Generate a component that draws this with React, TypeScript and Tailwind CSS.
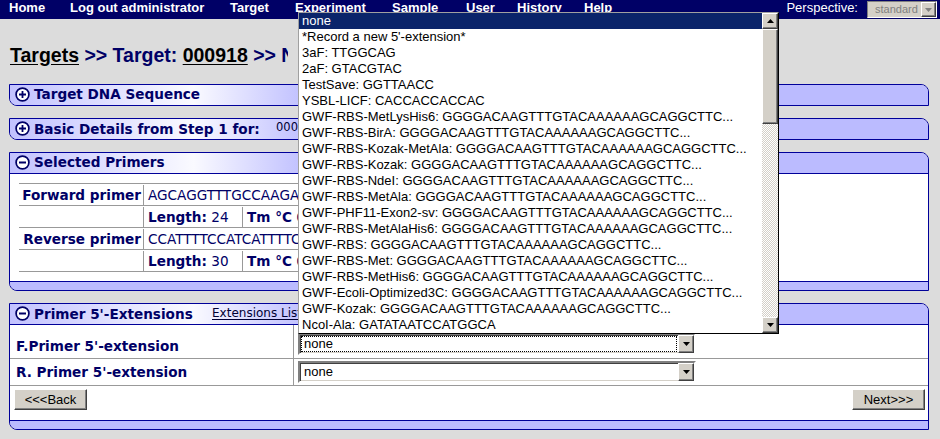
import React from "react";

const NAV = [
  { label: "Home", cls: "w-[61px]" },
  { label: "Log out administrator", cls: "w-[160px]" },
  { label: "Target", cls: "w-[65px]" },
  { label: "Experiment", cls: "w-[97px]" },
  { label: "Sample", cls: "w-[74px]" },
  { label: "User", cls: "w-[51px]" },
  { label: "History", cls: "w-[67px]" },
  { label: "Help", cls: "w-[60px]" },
];

const GWF = "GGGGACAAGTTTGTACAAAAAAGCAGGCTTC...";

const EXTENSIONS = [
  "none",
  "*Record a new 5'-extension*",
  "3aF: TTGGCAG",
  "2aF: GTACGTAC",
  "TestSave: GGTTAACC",
  "YSBL-LICF: CACCACCACCAC",
  `GWF-RBS-MetLysHis6: ${GWF}`,
  `GWF-RBS-BirA: ${GWF}`,
  `GWF-RBS-Kozak-MetAla: ${GWF}`,
  `GWF-RBS-Kozak: ${GWF}`,
  `GWF-RBS-NdeI: ${GWF}`,
  `GWF-RBS-MetAla: ${GWF}`,
  `GWF-PHF11-Exon2-sv: ${GWF}`,
  `GWF-RBS-MetAlaHis6: ${GWF}`,
  `GWF-RBS: ${GWF}`,
  `GWF-RBS-Met: ${GWF}`,
  `GWF-RBS-MetHis6: ${GWF}`,
  `GWF-Ecoli-Optimized3C: ${GWF}`,
  `GWF-Kozak: ${GWF}`,
  "NcoI-Ala: GATATAATCCATGGCA",
];

const raised =
  "border border-t-white border-l-white border-r-[#404040] border-b-[#404040] bg-[#d4d0c8] shadow-[inset_-1px_-1px_0_#808080]";

function Arrow({ up = false, color = "#000" }: { up?: boolean; color?: string }) {
  return (
    <svg width="7" height="4" viewBox="0 0 7 4">
      <path d={up ? "M3.5 0L7 4H0z" : "M0 0h7L3.5 4z"} fill={color} />
    </svg>
  );
}

function ToggleIcon({ open }: { open: boolean }) {
  return (
    <svg width="15" height="15" viewBox="0 0 15 15" className="shrink-0">
      <circle cx="7.5" cy="7.5" r="6.4" fill="#fff" stroke="#000066" strokeWidth="1.7" />
      <path d="M4 7.5h7" stroke="#000066" strokeWidth="1.8" />
      {!open && <path d="M7.5 4v7" stroke="#000066" strokeWidth="1.8" />}
    </svg>
  );
}

function SectionHeader({ open, children }: { open: boolean; children: React.ReactNode }) {
  return (
    <div
      className={`flex items-center gap-[4px] bg-[linear-gradient(to_right,#c2c2ff_0%,#fafaff_20%,#bbbbff_33%,#bbbbff_100%)] pb-[2px] pl-[5px] ${
        open ? "h-[21px] border-b border-[#000099]" : "h-[20px]"
      }`}
    >
      <ToggleIcon open={open} />
      {children}
    </div>
  );
}

function Title({ children }: { children: React.ReactNode }) {
  return (
    <span className="font-['DejaVu_Sans',Verdana,sans-serif] text-[13.6px] leading-[17px] font-bold text-[#000066]">
      {children}
    </span>
  );
}

function Select({ focused = false }: { focused?: boolean }) {
  return (
    <div className="flex h-[22px] w-[398px] border-2 border-t-[#808080] border-l-[#808080] border-r-white border-b-white bg-white shadow-[inset_1px_1px_0_#404040,inset_-1px_-1px_0_#d4d0c8]">
      <div className="flex flex-1 items-center p-[1px]">
        <div
          className={`flex h-full flex-1 items-center pl-[2px] font-['Liberation_Sans',Arial,sans-serif] text-[13px] font-normal text-black ${
            focused ? "border border-dotted border-black" : "border border-transparent"
          }`}
        >
          none
        </div>
      </div>
      <div className={`flex w-[16px] items-center justify-center ${raised}`}>
        <Arrow />
      </div>
    </div>
  );
}

function Button({ children }: { children: React.ReactNode }) {
  return (
    <button
      className={`flex h-[21px] w-[73px] items-center justify-center font-['Liberation_Sans',Arial,sans-serif] text-[13px] font-normal text-black ${raised}`}
    >
      {children}
    </button>
  );
}

function ExtensionList() {
  return (
    <div className="absolute top-[12px] left-[298px] z-10 flex h-[322px] w-[481px] border border-t-[#a0a0a0] border-l-[#a0a0a0] border-r-black border-b-black bg-white">
      <ul className="flex-1 font-['Liberation_Sans',Arial,sans-serif] text-[13px] leading-[16px] text-black">
        {EXTENSIONS.map((item, i) => (
          <li
            key={item}
            className={`h-[16px] truncate pl-[3px] ${i === 0 ? "bg-[#0a246a] text-white" : ""}`}
          >
            {item}
          </li>
        ))}
      </ul>
      <div className="flex w-[16px] flex-col">
        <div className={`flex h-[16px] items-center justify-center ${raised}`}>
          <Arrow up />
        </div>
        <div className={`h-[95px] ${raised}`} />
        <div className="flex-1 bg-[repeating-conic-gradient(#d4d0c8_0_25%,#ffffff_0_50%)] bg-[length:2px_2px]" />
        <div className={`flex h-[16px] items-center justify-center ${raised}`}>
          <Arrow />
        </div>
      </div>
    </div>
  );
}

const cell = "border-l border-[#999999] pl-[4px]";

export default function App() {
  return (
    <div className="relative h-[439px] w-[940px] overflow-hidden bg-[#dcdcdc]">
      {/* top navigation */}
      <div className="flex h-[19px] items-start bg-[#000066] font-['Liberation_Sans',Arial,sans-serif] text-[13px] leading-[15px] text-white">
        <nav className="flex pl-[9px] font-bold">
          {NAV.map((n) => (
            <span key={n.label} className={n.cls}>
              {n.label}
            </span>
          ))}
        </nav>
        <div className="ml-auto flex items-start pr-[3px]">
          <span>Perspective:</span>
          <div className="mt-[1px] ml-[9px] flex h-[17px] w-[70px] border border-t-[#808080] border-l-[#808080] border-r-white border-b-white bg-[#d4d0c8]">
            <span className="flex-1 pl-[7px] text-[11px] leading-[15px] text-[#808080]">standard</span>
            <div className={`flex w-[15px] items-center justify-center ${raised}`}>
              <Arrow color="#808080" />
            </div>
          </div>
        </div>
      </div>

      {/* breadcrumb */}
      <h1 className="mt-[25px] w-[288px] overflow-hidden pl-[10px] font-['Liberation_Sans',Arial,sans-serif] text-[19.5px] leading-[22px] font-bold whitespace-nowrap text-[#000066]">
        <a className="text-black underline underline-offset-[2px]">Targets</a>
        {" >> Target: "}
        <a className="text-black underline underline-offset-[2px]">000918</a>
        {" >> New"}
      </h1>

      <div className="mt-[18px] flex flex-col gap-[12px] pr-[11px] pl-[9px]">
        <div className="overflow-hidden rounded-tr-[8px] rounded-bl-[8px] border border-[#000099]">
          <SectionHeader open={false}>
            <Title>Target DNA Sequence</Title>
          </SectionHeader>
        </div>

        <div className="overflow-hidden rounded-tr-[8px] rounded-bl-[8px] border border-[#000099]">
          <SectionHeader open={false}>
            <span className="w-[238px]">
              <Title>Basic Details from Step 1 for:</Title>
            </span>
            <span className="font-['DejaVu_Sans',Verdana,sans-serif] text-[11.5px] text-[#000033]">000918</span>
          </SectionHeader>
        </div>

        <div className="overflow-hidden rounded-tr-[8px] rounded-bl-[8px] border border-[#000099]">
          <SectionHeader open>
            <Title>Selected Primers</Title>
          </SectionHeader>
          <div className="bg-white py-[9px] pl-[9px] font-['DejaVu_Sans',Verdana,sans-serif] text-[13.6px] leading-[20px] text-[#000066]">
            <div className="w-[560px] border-t border-[#999999]">
              <div className="flex h-[22px] items-center border-b border-[#999999]">
                <div className="w-[124px] pr-[2px] text-right font-bold">Forward primer</div>
                <div className={`flex-1 ${cell}`}>AGCAGGTTTGCCAAGATGG</div>
              </div>
              <div className="flex h-[22px] items-center border-b border-[#999999]">
                <div className="w-[124px]" />
                <div className={`w-[99px] ${cell}`}>
                  <b>Length:</b> 24
                </div>
                <div className={`flex-1 ${cell}`}>
                  <b>Tm °C</b> 61.4
                </div>
              </div>
              <div className="flex h-[22px] items-center border-b border-[#999999]">
                <div className="w-[124px] pr-[2px] text-right font-bold">Reverse primer</div>
                <div className={`flex-1 ${cell}`}>CCATTTTCCATCATTTTCAG</div>
              </div>
              <div className="flex h-[22px] items-center border-b border-[#999999]">
                <div className="w-[124px]" />
                <div className={`w-[99px] ${cell}`}>
                  <b>Length:</b> 30
                </div>
                <div className={`flex-1 ${cell}`}>
                  <b>Tm °C</b> 60.8
                </div>
              </div>
            </div>
          </div>
          <div className="h-[9px] border-t border-[#000099] bg-[#bbbbff]" />
        </div>

        <div className="overflow-hidden rounded-tr-[8px] rounded-bl-[8px] border border-[#000099]">
          <SectionHeader open>
            <span className="w-[174px]">
              <Title>Primer 5'-Extensions</Title>
            </span>
            <a className="font-['DejaVu_Sans',Verdana,sans-serif] text-[12px] text-[#000033] underline underline-offset-[2px]">
              Extensions List
            </a>
          </SectionHeader>
          <div className="bg-white font-['DejaVu_Sans',Verdana,sans-serif] text-[13.6px] leading-[20px] font-bold text-[#000066]">
            <div className="flex h-[34px] border-b border-[#999999]">
              <div className="w-[283px] pt-[11px] pl-[6px]">F.Primer 5'-extension</div>
              <div className="border-l border-[#999999] pt-[8px] pl-[4px]">
                <Select focused />
              </div>
            </div>
            <div className="flex h-[27px] border-b border-[#999999]">
              <div className="w-[283px] pt-[3px] pl-[6px]">R. Primer 5'-extension</div>
              <div className="border-l border-[#999999] pt-[2px] pl-[4px]">
                <Select />
              </div>
            </div>
            <div className="flex h-[34px] items-start justify-between pt-[3px] pr-[3px] pl-[4px]">
              <Button>&lt;&lt;&lt;Back</Button>
              <Button>Next&gt;&gt;&gt;</Button>
            </div>
          </div>
          <div className="h-[9px] border-t border-[#000099] bg-[#bbbbff]" />
        </div>
      </div>

      <ExtensionList />
    </div>
  );
}
